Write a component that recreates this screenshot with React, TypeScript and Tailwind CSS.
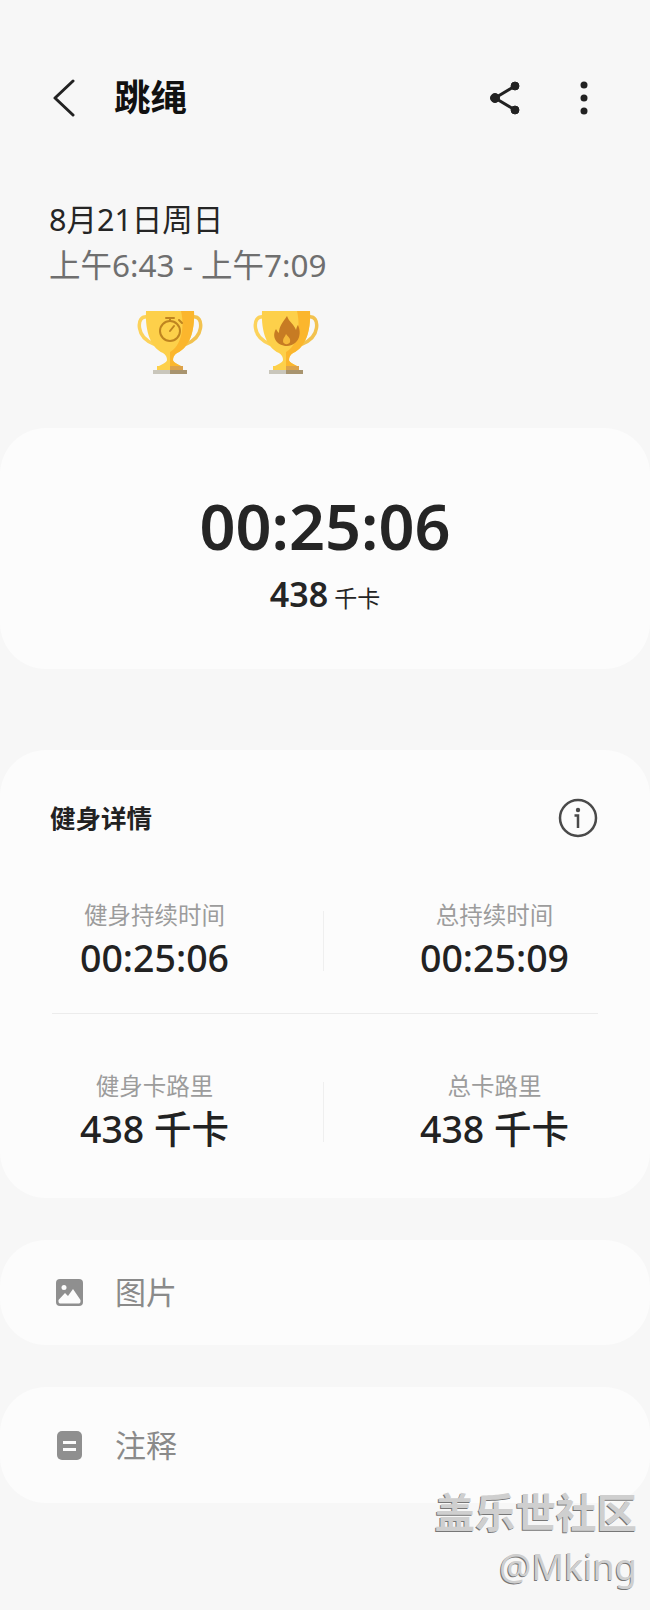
const cjk = "font-['Noto_Sans','Noto_Sans_CJK_SC',sans-serif]";

function Trophy({ children }: { children: React.ReactNode }) {
  return (
    <svg width="66" height="64" viewBox="0 0 66 64" fill="none">
      <path d="M11 7C4 6 1.500 11 2.500 18C3.500 25 9 31 17 34" stroke="#fcd25a" strokeWidth="3.500" strokeLinecap="round" />
      <path d="M55 7C62 6 64.500 11 63.500 18C62.500 25 57 31 49 34" stroke="#f2c24f" strokeWidth="3.500" strokeLinecap="round" />
      <path d="M9 1H57C58 22 52 38 40 43C37 45 36 47 36 50C36 52 40 54 44 56H22C26 54 30 52 30 50C30 47 29 45 26 43C14 38 8 22 9 1Z" fill="#fdd04a" />
      <path d="M44 1H57C58 22 52 38 40 43C37 45 36 47 36 50C36 52 40 54 44 56H33V42C44 36 48 18 44 1Z" fill="#fbb62d" />
      <rect x="20" y="56" width="13" height="4" fill="#fdd04a" />
      <rect x="33" y="56" width="13" height="4" fill="#dca24a" />
      <rect x="16" y="60" width="17" height="4" fill="#c9c6bb" />
      <rect x="33" y="60" width="17" height="4" fill="#a8946f" />
      {children}
    </svg>
  );
}

function Stat({ label, value }: { label: string; value: string }) {
  return (
    <div className="flex flex-col items-center">
      <div className="text-[23.500px] leading-[28px] text-[#9c9c9c]">{label}</div>
      <div className="mt-[7px] text-[37.500px] leading-[44px] font-medium text-[#222222]">{value}</div>
    </div>
  );
}

function StatRow({ left, right }: { left: [string, string]; right: [string, string] }) {
  return (
    <div className="grid grid-cols-[323px_1px_1fr] items-center">
      <div className="pr-[14px]">
        <Stat label={left[0]} value={left[1]} />
      </div>
      <div className="h-[60px] w-px bg-[#efefef]" />
      <div className="pl-[15px]">
        <Stat label={right[0]} value={right[1]} />
      </div>
    </div>
  );
}

export default function App() {
  return (
    <div className={`relative h-[1610px] w-[650px] overflow-hidden bg-[#f7f7f7] ${cjk}`}>
      <div className="flex h-[200px] items-center px-[50px] pb-[5px]">
        <svg width="24" height="38" viewBox="0 0 24 38" fill="none" className="ml-[2px]">
          <path d="M21 2L3 19L21 36" stroke="#222222" strokeWidth="3" strokeLinecap="round" strokeLinejoin="round" />
        </svg>
        <div className="ml-[38px] text-[36.500px] leading-none font-bold text-[#111111]">跳绳</div>
        <svg width="32" height="34" viewBox="0 0 32 34" fill="#222222" stroke="#222222" className="ml-auto mr-[58px]">
          <path d="M26 5L6 17L26 29" fill="none" strokeWidth="3" />
          <circle cx="26" cy="5" r="4" />
          <circle cx="6" cy="17" r="4.500" />
          <circle cx="26" cy="29" r="4" />
        </svg>
        <svg width="10" height="34" viewBox="0 0 10 34" fill="#222222" className="mr-[11px]">
          <circle cx="5" cy="4" r="3.500" />
          <circle cx="5" cy="17" r="3.500" />
          <circle cx="5" cy="30" r="3.500" />
        </svg>
      </div>

      <div className="pl-[49px]">
        <div className="text-[30.500px] leading-[38px] text-[#252525]">8月21日周日</div>
        <div className="mt-[8px] text-[31.500px] leading-[38px] text-[#6f6f6f]">上午6:43 - 上午7:09</div>
      </div>

      <div className="mt-[26px] ml-[137px] flex gap-[50px]">
        <Trophy>
          <g stroke="#bf8420" strokeWidth="2" strokeLinecap="round">
            <circle cx="33" cy="21" r="10" />
            <path d="M29 8H37M33 8V11M42 10L45 13M33 21L37 16" />
          </g>
        </Trophy>
        <Trophy>
          <path
            d="M34 6C36 12 41 14 43 20C44 16 45 15 45 15C49 24 46 35 34 36C24 36 18 27 23 19C24 21 25 22 26 23C26 16 30 12 34 6Z"
            fill="#c77b23"
          />
          <path d="M33 24C35 27 38 28 37 32C36 35 30 35 30 31C30 28 32 27 33 24Z" fill="#f6b93a" />
        </Trophy>
      </div>

      <div className="mt-[54px] flex h-[241px] flex-col items-center rounded-[46px] bg-[#fcfcfc] pt-[58px]">
        <div className="text-[63px] leading-[80px] font-semibold text-[#252525]">00:25:06</div>
        <div className="mt-[6px] flex items-baseline gap-[6px] text-[#252525]">
          <span className="text-[34px] leading-[44px] font-semibold">438</span>
          <span className="text-[23px] leading-[28px]">千卡</span>
        </div>
      </div>

      <div className="mt-[81px] h-[448px] rounded-[46px] bg-[#fcfcfc] px-[50px] pt-[48px]">
        <div className="flex items-center justify-between">
          <div className="text-[25.500px] leading-[38px] font-bold text-[#222222]">健身详情</div>
          <svg width="40" height="40" viewBox="0 0 40 40" fill="none" className="mr-[2px]">
            <circle cx="20" cy="20" r="18" stroke="#4a4a4a" strokeWidth="2.500" />
            <circle cx="20" cy="12" r="2.200" fill="#4a4a4a" />
            <path d="M16.500 17.500H20V30" stroke="#4a4a4a" strokeWidth="2.500" />
          </svg>
        </div>
        <div className="-mx-[50px] mt-[63px] mb-[33px]">
          <StatRow left={["健身持续时间", "00:25:06"]} right={["总持续时间", "00:25:09"]} />
        </div>
        <div className="mx-[2px] h-px bg-[#ececec]" />
        <div className="-mx-[50px] mt-[58px]">
          <StatRow left={["健身卡路里", "438 千卡"]} right={["总卡路里", "438 千卡"]} />
        </div>
      </div>

      <div className="mt-[42px] flex h-[105px] items-center rounded-[46px] bg-[#fcfcfc] pl-[56px]">
        <svg width="27" height="27" viewBox="0 0 27 27" className="shrink-0">
          <rect width="27" height="27" rx="4" fill="#8f8f8f" />
          <circle cx="8" cy="8.500" r="2.500" fill="#fcfcfc" />
          <path d="M2.500 21L9 14L12 17L17 10L24.500 21V22.500C24.500 24 23.500 24.500 22.500 24.500H4.500C3.500 24.500 2.500 24 2.500 22.500Z" fill="#fcfcfc" />
        </svg>
        <div className="ml-[32px] text-[31px] leading-none text-[#8a8a8a]">图片</div>
      </div>

      <div className="mt-[42px] flex h-[116px] items-center rounded-[46px] bg-[#fcfcfc] pl-[57px]">
        <svg width="25" height="29" viewBox="0 0 25 29" className="shrink-0">
          <rect width="25" height="29" rx="5" fill="#8f8f8f" />
          <rect x="6" y="10" width="13" height="3" fill="#fcfcfc" />
          <rect x="6" y="17" width="13" height="3" fill="#fcfcfc" />
        </svg>
        <div className="ml-[33px] text-[31px] leading-none text-[#8a8a8a]">注释</div>
      </div>

      <div className="absolute top-[1488px] right-[13px] flex flex-col items-end text-[#cfcfcf] [text-shadow:-1px_1px_0_#777777]">
        <div className="text-[40.500px] leading-[50px] font-bold">盖乐世社区</div>
        <div className="mt-[7px] text-[36px] leading-[44px]">@Mking</div>
      </div>
    </div>
  );
}
